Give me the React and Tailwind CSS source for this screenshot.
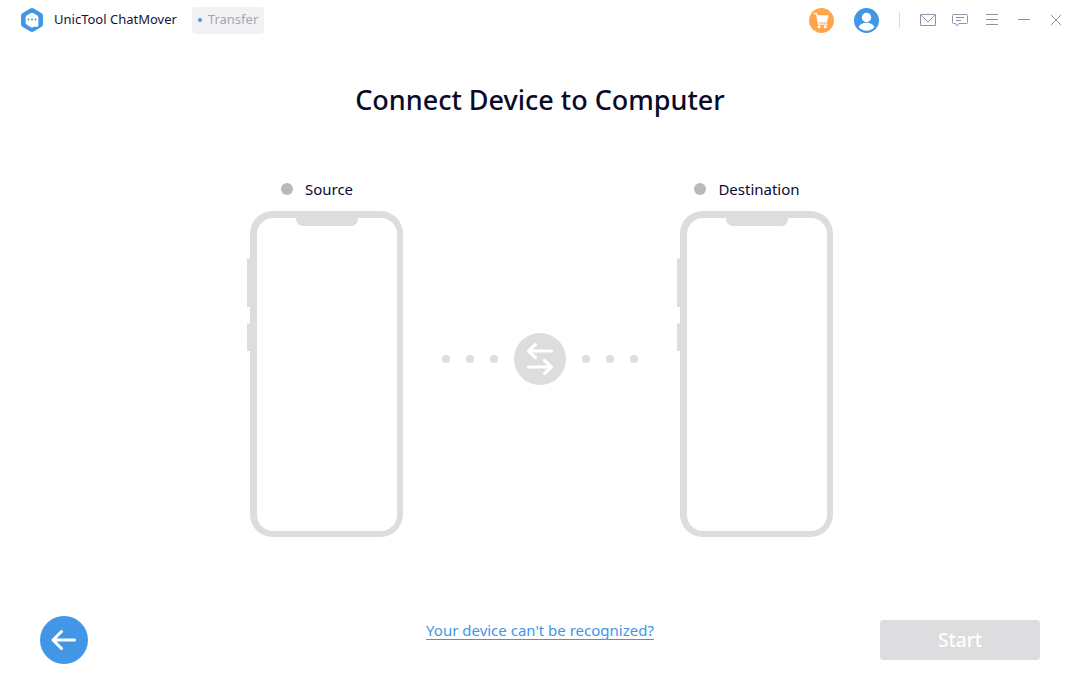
import React from 'react';

function LogoIcon() {
  return (
    <svg width="22" height="24" viewBox="0 0 22 24" aria-hidden="true">
      <path
        d="M9.3 0.5a3.4 3.4 0 0 1 3.4 0l7.6 4.4A3.4 3.4 0 0 1 22 7.8v8.4a3.4 3.4 0 0 1-1.7 2.9l-7.6 4.4a3.4 3.4 0 0 1-3.4 0l-7.6-4.4A3.4 3.4 0 0 1 0 16.2V7.800a3.400 3.400 0 0 1 1.700-2.900z"
        fill="#4196e6"
      />
      <path
        d="M9.600 5.200a2.800 2.800 0 0 1 2.800 0l3.600 2.100A2.800 2.800 0 0 1 17.400 9.700V17l-.9 2.300-2.700-.8-1.400.6a2.800 2.800 0 0 1-2.800-.2L6 16.800a2.800 2.800 0 0 1-1.400-2.400V9.700A2.800 2.800 0 0 1 6 7.300z"
        fill="#fff"
      />
      <circle cx="7.500" cy="11.500" r="1" fill="#4196e6" />
      <circle cx="11" cy="11.500" r="1" fill="#4196e6" />
      <circle cx="14.500" cy="11.500" r="1" fill="#4196e6" />
    </svg>
  );
}

function CartIcon() {
  return (
    <svg width="25" height="25" viewBox="0 0 25 25" aria-hidden="true">
      <circle cx="12.500" cy="12.500" r="12.500" fill="#ffa64d" />
      <path d="M5.200 5.600H7.500l2.200 10.600h8.300" fill="none" stroke="#fff" strokeWidth="1.300" strokeLinecap="round" strokeLinejoin="round" />
      <path d="M7.700 7.200h12l-1.900 7.400H9.400z" fill="#fff" />
      <circle cx="10" cy="18.800" r="1.500" fill="#fff" />
      <circle cx="16.200" cy="18.800" r="1.500" fill="#fff" />
    </svg>
  );
}

function UserIcon() {
  return (
    <svg width="25" height="25" viewBox="0 0 25 25" aria-hidden="true">
      <circle cx="12.500" cy="12.500" r="12.500" fill="#4196e6" />
      <circle cx="12.500" cy="9.500" r="4.700" fill="#fff" />
      <path d="M4.600 19.300c1-3 3.700-4.500 7.900-4.500s6.900 1.500 7.900 4.500c-1.900 2.300-4.800 3.500-7.900 3.500s-6-1.200-7.900-3.500z" fill="#fff" />
    </svg>
  );
}

const windowIcons = [
  {
    label: 'Mail',
    shape: (
      <>
        <rect x="0.500" y="2.500" width="15" height="11" rx="0.500" />
        <path d="M1 3l7 7 7-7" />
      </>
    ),
  },
  {
    label: 'Feedback',
    shape: (
      <>
        <path d="M1.500 2.500h13a1 1 0 0 1 1 1v7a1 1 0 0 1-1 1H7l-2 2.500-1.500-2.500h-2a1 1 0 0 1-1-1v-7a1 1 0 0 1 1-1z" />
        <path d="M4 5.500h8M4 8.500h5" />
      </>
    ),
  },
  { label: 'Menu', shape: <path d="M2 2.500h12M2 7.500h12M2 12.500h12" /> },
  { label: 'Minimize', shape: <path d="M2 7.500h12" /> },
  { label: 'Close', shape: <path d="M3 3l10 10M13 3L3 13" /> },
];

function TitleBar() {
  return (
    <header className="flex h-10 items-center justify-between pl-[21px] pr-4">
      <div className="flex items-center">
        <LogoIcon />
        <span className="ml-[11px] text-[13px] text-[#14143a]">UnicTool ChatMover</span>
        <span className="ml-[15px] flex h-[27px] items-center gap-[6px] rounded bg-[#f2f2f4] px-[6px] text-[13px] text-[#a5a5b9]">
          <span className="h-1 w-1 rounded-full bg-[#4196e6]" />
          Transfer
        </span>
      </div>

      <div className="flex items-center">
        <button type="button" aria-label="Store">
          <CartIcon />
        </button>
        <button type="button" aria-label="Account" className="ml-5">
          <UserIcon />
        </button>
        <span className="mx-5 h-4 w-px bg-[#d8d8de]" />
        <div className="flex gap-4">
          {windowIcons.map(({ label, shape }) => (
            <button key={label} type="button" aria-label={label}>
              <svg width="16" height="16" viewBox="0 0 16 16" fill="none" stroke="#9191ae">
                {shape}
              </svg>
            </button>
          ))}
        </div>
      </div>
    </header>
  );
}

function Phone({ label }) {
  return (
    <div className="flex flex-col">
      <div className="mb-[14px] flex items-center justify-center gap-3 pr-4 text-[15px] leading-4 text-[#0a0a32]">
        <span className="h-3 w-3 rounded-full bg-[#b9b9b9]" />
        {label}
      </div>
      <svg width="156" height="326" viewBox="0 0 156 326" aria-hidden="true">
        <path d="M0 47.500h4v48.500H0zM0 112.500h4V140H0z" fill="#dddddf" />
        <rect x="3" y="0" width="153" height="326" rx="22.500" fill="#dddddf" />
        <rect x="10" y="7" width="140" height="313" rx="16" fill="#fff" />
        <path d="M49 6h62v2a7 7 0 0 1-7 7H56a7 7 0 0 1-7-7z" fill="#dddddf" />
      </svg>
    </div>
  );
}

function Dots() {
  return (
    <div className="flex gap-4">
      <span className="h-2 w-2 rounded-full bg-[#dddddf]" />
      <span className="h-2 w-2 rounded-full bg-[#dddddf]" />
      <span className="h-2 w-2 rounded-full bg-[#dddddf]" />
    </div>
  );
}

function TransferIndicator() {
  return (
    <div className="flex items-center gap-4">
      <Dots />
      <svg width="52" height="52" viewBox="0 0 52 52" aria-hidden="true">
        <circle cx="26" cy="26" r="26" fill="#dddddf" />
        <g fill="none" stroke="#fff" strokeWidth="3.200" strokeLinecap="round" strokeLinejoin="round">
          <path d="M37.500 18H14.500M21.500 11.500L14.500 18l7 6.500" />
          <path d="M14.500 34H37.500M30.500 27.500L37.500 34l-7 6.500" />
        </g>
      </svg>
      <Dots />
    </div>
  );
}

export default function App() {
  return (
    <div className="flex min-h-screen flex-col bg-white font-['Noto_Sans','Open_Sans',sans-serif]">
      <TitleBar />

      <main className="flex grow flex-col items-center">
        <h1 className="mt-10 text-[27px] font-medium leading-10 text-[#0a0a28]">
          Connect Device to Computer
        </h1>
        <div className="mt-[61px] flex items-center gap-[39px]">
          <Phone label="Source" />
          <TransferIndicator />
          <Phone label="Destination" />
        </div>
      </main>

      <footer className="grid grid-cols-[1fr_auto_1fr] items-center px-10 pb-4">
        <button type="button" aria-label="Back" className="justify-self-start">
          <svg width="48" height="48" viewBox="0 0 48 48">
            <circle cx="24" cy="24" r="24" fill="#4196e6" />
            <path
              d="M34.500 24H13.500M21.500 15.500L13 24l8.500 8.500"
              fill="none"
              stroke="#fff"
              strokeWidth="3"
              strokeLinecap="round"
              strokeLinejoin="round"
            />
          </svg>
        </button>
        <a href="#help" className="self-start text-[15px] leading-7 text-[#4196e6] underline underline-offset-3">
          Your device can't be recognized?
        </a>
        <button
          type="button"
          disabled
          className="h-10 w-40 justify-self-end rounded bg-[#dddddf] text-[19px] font-medium text-white"
        >
          Start
        </button>
      </footer>
    </div>
  );
}
